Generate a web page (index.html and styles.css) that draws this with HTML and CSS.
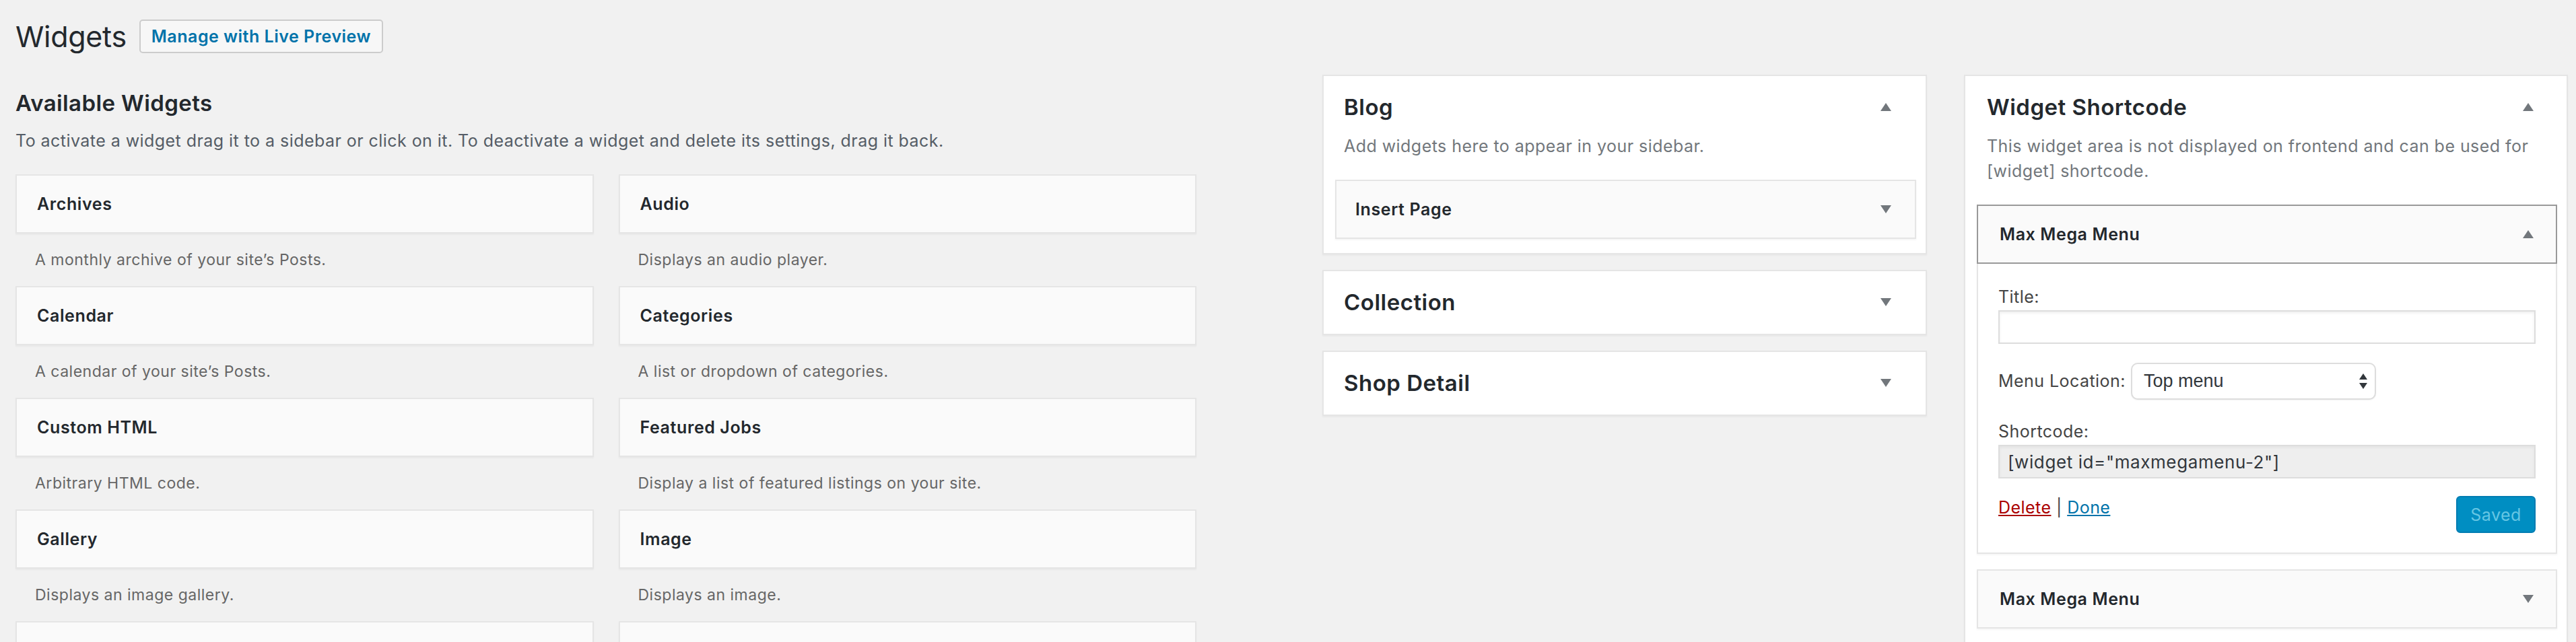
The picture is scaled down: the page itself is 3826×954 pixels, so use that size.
FILE: index.html
```html
<!DOCTYPE html>
<html lang="en">
<head>
<meta charset="utf-8">
<title>Widgets</title>
<link rel="stylesheet" href="styles.css">
</head>
<body>
<div class="wrap">
  <div class="page-head">
    <h1 class="page-title">Widgets</h1>
    <a class="btn-secondary">Manage with Live Preview</a>
  </div>

  <div class="layout">
    <section class="available">
      <h2 class="avail-title">Available Widgets</h2>
      <p class="avail-intro">To activate a widget drag it to a sidebar or click on it. To deactivate a widget and delete its settings, drag it back.</p>
      <div class="avail-grid">
        <div class="avail-item"><div class="avail-top"><h3 class="w-title">Archives</h3></div><p class="avail-desc">A monthly archive of your site’s Posts.</p></div>
        <div class="avail-item"><div class="avail-top"><h3 class="w-title">Audio</h3></div><p class="avail-desc">Displays an audio player.</p></div>
        <div class="avail-item"><div class="avail-top"><h3 class="w-title">Calendar</h3></div><p class="avail-desc">A calendar of your site’s Posts.</p></div>
        <div class="avail-item"><div class="avail-top"><h3 class="w-title">Categories</h3></div><p class="avail-desc">A list or dropdown of categories.</p></div>
        <div class="avail-item"><div class="avail-top"><h3 class="w-title">Custom HTML</h3></div><p class="avail-desc">Arbitrary HTML code.</p></div>
        <div class="avail-item"><div class="avail-top"><h3 class="w-title">Featured Jobs</h3></div><p class="avail-desc">Display a list of featured listings on your site.</p></div>
        <div class="avail-item"><div class="avail-top"><h3 class="w-title">Gallery</h3></div><p class="avail-desc">Displays an image gallery.</p></div>
        <div class="avail-item"><div class="avail-top"><h3 class="w-title">Image</h3></div><p class="avail-desc">Displays an image.</p></div>
        <div class="avail-item"><div class="avail-top"><h3 class="w-title">&nbsp;</h3></div></div>
        <div class="avail-item"><div class="avail-top"><h3 class="w-title">&nbsp;</h3></div></div>
      </div>
    </section>

    <section class="col-mid">
      <div class="panel">
        <div class="panel-head">
          <h2 class="panel-title">Blog</h2>
          <svg class="tri" viewBox="0 0 16 12"><polygon points="8,0 16,12 0,12"/></svg>
        </div>
        <p class="panel-desc">Add widgets here to appear in your sidebar.</p>
        <div class="widget">
          <div class="widget-top">
            <h3 class="w-title">Insert Page</h3>
            <svg class="tri" viewBox="0 0 16 12"><polygon points="0,0 16,0 8,12"/></svg>
          </div>
        </div>
      </div>
      <div class="panel closed">
        <div class="panel-head">
          <h2 class="panel-title">Collection</h2>
          <svg class="tri" viewBox="0 0 16 12"><polygon points="0,0 16,0 8,12"/></svg>
        </div>
      </div>
      <div class="panel closed">
        <div class="panel-head">
          <h2 class="panel-title">Shop Detail</h2>
          <svg class="tri" viewBox="0 0 16 12"><polygon points="0,0 16,0 8,12"/></svg>
        </div>
      </div>
    </section>

    <section class="col-right">
      <div class="panel panel-right">
        <div class="panel-head">
          <h2 class="panel-title">Widget Shortcode</h2>
          <svg class="tri" viewBox="0 0 16 12"><polygon points="8,0 16,12 0,12"/></svg>
        </div>
        <p class="panel-desc">This widget area is not displayed on frontend and can be used for<br>[widget] shortcode.</p>
        <div class="widget open">
          <div class="widget-top">
            <h3 class="w-title">Max Mega Menu</h3>
            <svg class="tri" viewBox="0 0 16 12"><polygon points="8,0 16,12 0,12"/></svg>
          </div>
          <div class="widget-inside">
            <label class="field-label">Title:</label>
            <input class="text-input" type="text" value="">
            <div class="loc-row">
              <span class="field-label">Menu Location:</span>
              <div class="fake-select">
                <span class="select-value">Top menu</span>
                <svg class="select-arrows" viewBox="0 0 12 24"><polygon points="6,0 12,9 0,9"/><polygon points="0,14 12,14 6,23"/></svg>
              </div>
            </div>
            <label class="field-label sc-label">Shortcode:</label>
            <div class="shortcode">[widget id="maxmegamenu-2"]</div>
            <div class="actions">
              <div class="links"><a class="del">Delete</a> | <a class="done">Done</a></div>
              <span class="btn-saved">Saved</span>
            </div>
          </div>
        </div>
        <div class="widget">
          <div class="widget-top">
            <h3 class="w-title">Max Mega Menu</h3>
            <svg class="tri" viewBox="0 0 16 12"><polygon points="0,0 16,0 8,12"/></svg>
          </div>
        </div>
      </div>
    </section>
  </div>
</div>
</body>
</html>
```

FILE: styles.css
```css
html, body {
  margin: 0;
  padding: 0;
  background: #f1f1f1;
  height: 100%;
  overflow: hidden;
}
body {
  font-family: Inter, Roboto, "Liberation Sans", sans-serif;
  font-size: 25px;
  letter-spacing: 0.45px;
  color: #444;
}
.wrap {
  padding-left: 23px;
}
.page-head {
  display: flex;
  align-items: center;
  padding-top: 29px;
  height: 50px;
}
.page-title {
  margin: 0;
  font-size: 43px;
  font-weight: 400;
  line-height: 50px;
  color: #23282d;
  letter-spacing: -0.3px;
}
.btn-secondary {
  margin-left: 19px;
  box-sizing: border-box;
  height: 50px;
  display: flex;
  align-items: center;
  padding: 0 16px;
  border: 2px solid #ccc;
  border-radius: 5px;
  background: #f7f7f7;
  color: #0073aa;
  font-weight: 600;
  font-size: 25px;
  letter-spacing: 0.5px;
}
.layout {
  display: flex;
  align-items: flex-start;
  margin-top: 32px;
}
.available {
  width: 1754px;
  flex: none;
}
.avail-title {
  margin: 22px 0 0;
  font-size: 33px;
  line-height: 40px;
  font-weight: 600;
  letter-spacing: 0.4px;
  color: #23282d;
}
.avail-intro {
  margin: 17px 0 31px;
  line-height: 38px;
  color: #555d66;
}
.avail-grid {
  display: grid;
  grid-template-columns: 1fr 1fr;
  column-gap: 37px;
}
.avail-top {
  box-sizing: border-box;
  height: 88px;
  background: #fafafa;
  border: 2px solid #e5e5e5;
  box-shadow: 0 2px 2px rgba(0, 0, 0, 0.04);
  display: flex;
  align-items: center;
  padding-left: 30px;
}
.w-title {
  margin: 0;
  font-size: 25px;
  line-height: 40px;
  font-weight: 600;
  letter-spacing: 0.6px;
  color: #23282d;
}
.avail-desc {
  margin: 0;
  padding: 20px 0 20px 29px;
  line-height: 38px;
  font-size: 23px;
  letter-spacing: 0.5px;
  color: #666;
}
.col-mid {
  width: 898px;
  flex: none;
  margin-left: 187px;
}
.col-right {
  width: 897px;
  flex: none;
  margin-left: 55px;
}
.panel {
  background: #fff;
  border: 2px solid #e5e5e5;
  box-shadow: 0 2px 2px rgba(0, 0, 0, 0.04);
  padding-bottom: 21px;
  margin-bottom: 23px;
}
.panel.closed {
  padding-bottom: 0;
}
.panel-head {
  display: flex;
  align-items: center;
  justify-content: space-between;
  padding: 26px 51px 0 30px;
}
.panel.closed .panel-head {
  padding-bottom: 27px;
}
.panel-right .panel-head {
  padding-left: 32px;
  padding-right: 49px;
}
.panel-title {
  margin: 0;
  font-size: 33px;
  line-height: 40px;
  font-weight: 600;
  letter-spacing: 0.5px;
  color: #23282d;
}
.tri {
  width: 16px;
  height: 12px;
  fill: #72777c;
  flex: none;
}
.panel-desc {
  margin: 20px 30px 31px;
  line-height: 37px;
  color: #72777c;
}
.panel-right .panel-desc {
  margin-left: 32px;
  margin-right: 20px;
}
.widget {
  margin: 0 14px 0 17px;
}
.widget + .widget {
  margin-top: 23px;
}
.widget-top {
  box-sizing: border-box;
  height: 88px;
  background: #fafafa;
  border: 2px solid #e5e5e5;
  box-shadow: 0 2px 2px rgba(0, 0, 0, 0.04);
  display: flex;
  align-items: center;
  justify-content: space-between;
  padding: 0 35px 0 28px;
}
.panel-right .widget-top {
  padding: 0 33px 0 32px;
}
.widget.open .widget-top {
  border-color: #999;
  box-shadow: none;
}
.widget-inside {
  border: 2px solid #e5e5e5;
  border-top: 0;
  background: #fff;
  padding: 31px 30px 29px;
  box-shadow: 0 2px 2px rgba(0, 0, 0, 0.04);
}
.field-label {
  display: block;
  line-height: 37px;
  color: #444;
}
.text-input {
  display: block;
  box-sizing: border-box;
  width: 100%;
  height: 50px;
  margin: 1px 0 0;
  border: 2px solid #ddd;
  background: #fff;
  box-shadow: inset 0 2px 4px rgba(0, 0, 0, 0.07);
  font: inherit;
}
.loc-row {
  display: flex;
  align-items: center;
  margin-top: 28px;
  height: 55px;
}
.fake-select {
  box-sizing: border-box;
  margin-left: 8px;
  width: 364px;
  height: 55px;
  border: 2px solid #ddd;
  border-radius: 10px;
  background: #fff;
  display: flex;
  align-items: center;
  justify-content: space-between;
  padding: 0 11px 0 17px;
  box-shadow: 0 1px 2px rgba(0, 0, 0, 0.05);
}
.select-value {
  font-family: "Liberation Sans", Arial, sans-serif;
  font-size: 27px;
  letter-spacing: 0;
  color: #32373c;
}
.select-arrows {
  width: 12px;
  height: 24px;
  fill: #32373c;
}
.sc-label {
  margin-top: 29px;
}
.shortcode {
  box-sizing: border-box;
  height: 50px;
  margin-top: 1px;
  border: 2px solid #ddd;
  background: #eee;
  padding-left: 12px;
  display: flex;
  align-items: center;
  color: #32373c;
  font-size: 26px;
  letter-spacing: 0.6px;
  box-shadow: inset 0 2px 4px rgba(0, 0, 0, 0.05);
}
.actions {
  display: flex;
  justify-content: space-between;
  align-items: flex-start;
  margin-top: 26px;
}
.links {
  line-height: 37px;
  margin-top: -1px;
  color: #444;
}
.del {
  color: #a00;
  text-decoration: underline;
}
.done {
  color: #0073aa;
  text-decoration: underline;
}
.btn-saved {
  box-sizing: border-box;
  width: 118px;
  height: 55px;
  display: flex;
  align-items: center;
  justify-content: center;
  background: #008ec2;
  border: 2px solid #007cb2;
  border-radius: 6px;
  color: #66c6e4;
  font-size: 25px;
}
```
